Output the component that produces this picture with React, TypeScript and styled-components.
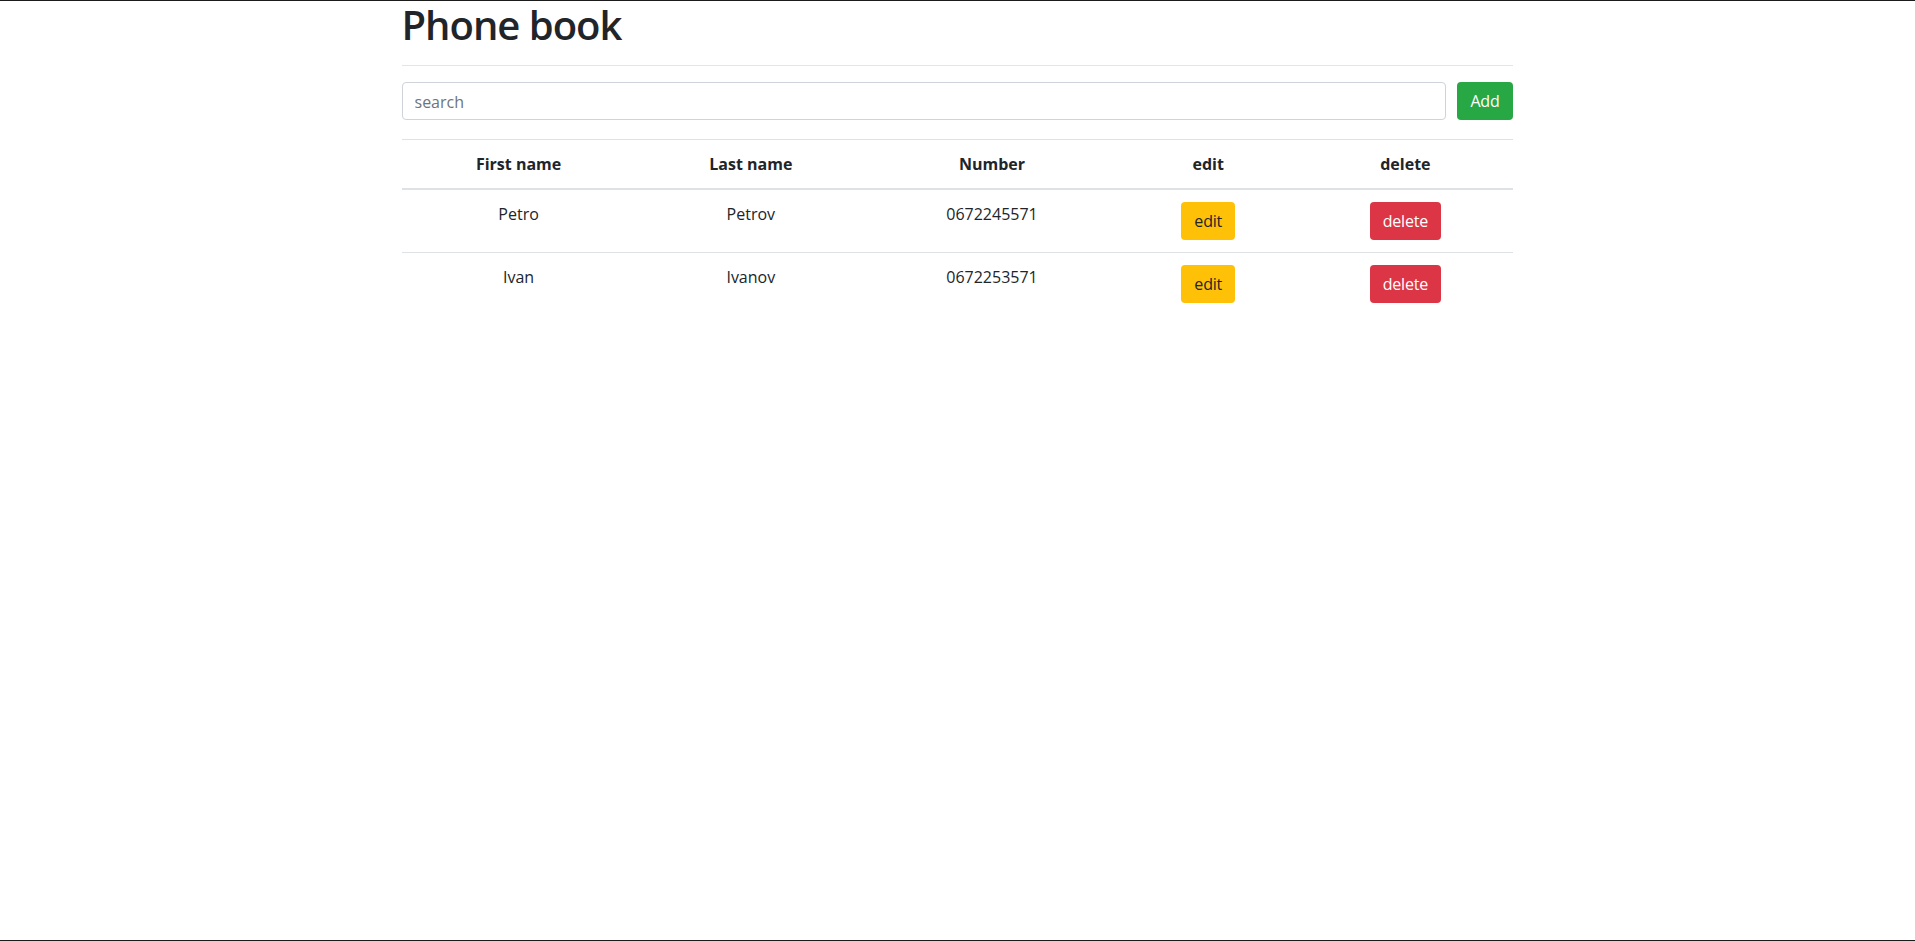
import React from "react";
import styled, { createGlobalStyle } from "styled-components";

const GlobalStyle = createGlobalStyle`
  *, *::before, *::after { box-sizing: border-box; }
  html, body { margin: 0; padding: 0; background: #fff; }
  body {
    font-family: "Open Sans", "Noto Sans", sans-serif;
    font-size: 16px;
    line-height: 1.5;
    color: #212529;
  }
`;

const Page = styled.div`
  min-height: 100vh;
  border-top: 1px solid #1b1b1b;
  border-bottom: 1px solid #1b1b1b;
`;

const Container = styled.div`
  width: 1140px;
  margin: 0 auto;
  padding: 0 15px 0 14px;
`;

const Title = styled.h1`
  margin: 0;
  font-size: 40px;
  line-height: 48px;
  font-weight: 600;
  letter-spacing: -1px;
`;

const Divider = styled.hr`
  margin: 16px 0;
  border: 0;
  border-top: 1px solid rgba(0, 0, 0, 0.1);
`;

const Toolbar = styled.div`
  display: flex;
  gap: 11px;
  margin-bottom: 19px;
`;

const SearchInput = styled.input`
  flex: 1;
  height: 38px;
  padding: 7px 12px 5px;
  font-family: inherit;
  font-size: 16px;
  color: #495057;
  border: 1px solid #ced4da;
  border-radius: 4px;
  outline: none;
  &::placeholder { color: #6c757d; }
`;

const Button = styled.button<{ $variant: "success" | "warning" | "danger" }>`
  height: 38px;
  padding: 6px 12px;
  font-family: inherit;
  font-size: 16px;
  line-height: 24px;
  letter-spacing: -0.2px;
  border: 1px solid transparent;
  border-radius: 4px;
  cursor: pointer;
  background: ${(p) =>
    p.$variant === "success" ? "#28a745" : p.$variant === "warning" ? "#ffc107" : "#dc3545"};
  color: ${(p) => (p.$variant === "warning" ? "#212529" : "#fff")};
`;

const Table = styled.table`
  width: 100%;
  border-collapse: collapse;
  table-layout: fixed;
`;

const Th = styled.th`
  padding: 12px;
  font-weight: 700;
  text-align: center;
  vertical-align: bottom;
  border-top: 1px solid #dee2e6;
  border-bottom: 2px solid #dee2e6;
`;

const Td = styled.td`
  padding: 12px;
  text-align: center;
  vertical-align: top;
  border-top: 1px solid #dee2e6;
`;

const Row = styled.tr`
  &:first-child td { border-top: 0; }
`;

const columns = [
  { label: "First name", width: 234 },
  { label: "Last name", width: 230 },
  { label: "Number", width: 252 },
  { label: "edit", width: 180 },
  { label: "delete", width: 214 },
];

const contacts = [
  { first: "Petro", last: "Petrov", number: "0672245571" },
  { first: "Ivan", last: "Ivanov", number: "0672253571" },
];

export default function App() {
  return (
    <>
      <GlobalStyle />
      <Page>
        <Container>
          <Title>Phone book</Title>
          <Divider />
          <Toolbar>
            <SearchInput placeholder="search" />
            <Button $variant="success">Add</Button>
          </Toolbar>
          <Table>
            <colgroup>
              {columns.map((c) => (
                <col key={c.label} style={{ width: c.width }} />
              ))}
            </colgroup>
            <thead>
              <tr>
                {columns.map((c) => (
                  <Th key={c.label}>{c.label}</Th>
                ))}
              </tr>
            </thead>
            <tbody>
              {contacts.map((c) => (
                <Row key={c.number}>
                  <Td>{c.first}</Td>
                  <Td>{c.last}</Td>
                  <Td>{c.number}</Td>
                  <Td>
                    <Button $variant="warning">edit</Button>
                  </Td>
                  <Td>
                    <Button $variant="danger">delete</Button>
                  </Td>
                </Row>
              ))}
            </tbody>
          </Table>
        </Container>
      </Page>
    </>
  );
}
